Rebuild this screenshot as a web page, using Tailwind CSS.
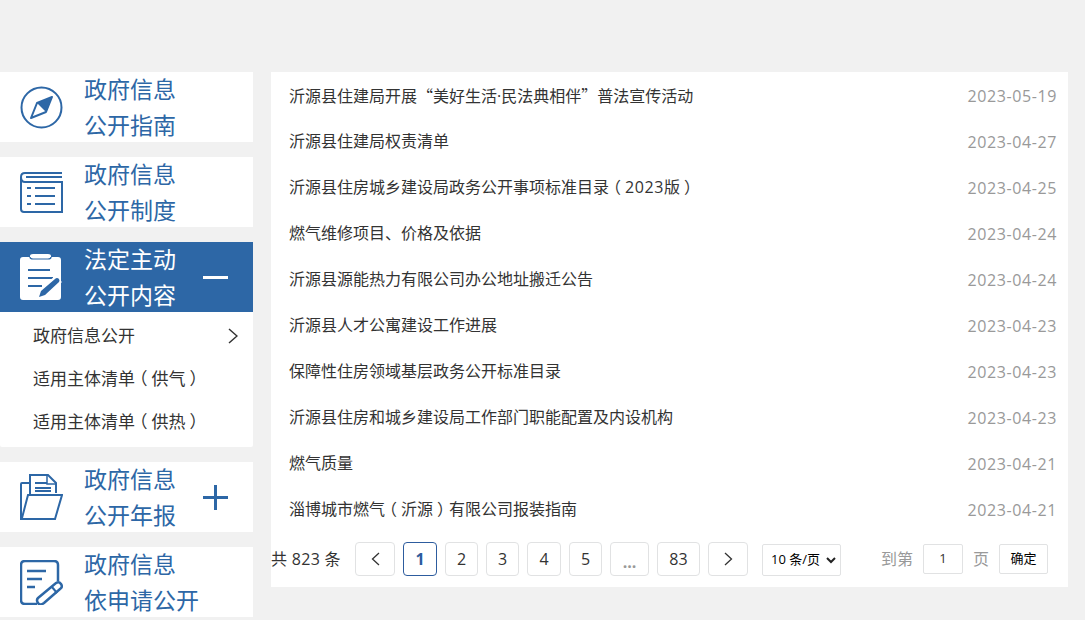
<!DOCTYPE html>
<html lang="zh-CN">

<head>
    <meta charset="UTF-8">
    <title>法定主动公开内容</title>
    <script src="https://cdn.jsdelivr.net/npm/@tailwindcss/browser@4"></script>
</head>

<body class="bg-[#f1f1f1] h-[620px] overflow-hidden font-['Open_Sans','Noto_Sans_CJK_SC',sans-serif]">
    <div class="flex items-start pt-[72px] w-[1085px]">
        <!-- Sidebar -->
        <aside class="w-[253px] flex flex-col gap-[15px] shrink-0">
            <a class="h-[70px] bg-white flex items-center pl-5 text-[#2d67a6]">
                <svg class="w-[43px] h-[43px] shrink-0" viewBox="0 0 43 43" fill="none">
                    <circle cx="21.5" cy="21.5" r="20" stroke="#2d67a6" stroke-width="2"/>
                    <path d="M32 11L17 17L11 32L26 26Z" stroke="#2d67a6" stroke-width="2" stroke-linejoin="round"/>
                    <path d="M32 11L17 17L26 26Z" fill="#2d67a6"/>
                </svg>
                <span class="ml-[21px] text-[23px] leading-[36px]">政府信息<br>公开指南</span>
            </a>
            <a class="h-[70px] bg-white flex items-center pl-5 text-[#2d67a6]">
                <svg class="w-[43px] h-[43px] shrink-0" viewBox="0 0 43 43" fill="none" stroke="#2d67a6">
                    <path d="M42 2H5Q1 2 1 6V38Q1 41 4 41H42V11H5Q1 11 1 6" stroke-width="2"/>
                    <path d="M6 6H42" stroke-width="2"/>
                    <path d="M7 17H11M15 17H35M7 25H11M15 25H35M7 33H11M15 33H35" stroke-width="2"/>
                </svg>
                <span class="ml-[21px] text-[23px] leading-[36px]">政府信息<br>公开制度</span>
            </a>
            <div>
                <a class="h-[70px] bg-[#2d67a6] flex items-center pl-5 text-white">
                    <svg class="w-[43px] h-[46px] shrink-0" viewBox="0 0 43 46" fill="none">
                        <path d="M3 3H10V2Q10 0 13 0H28Q31 0 31 2V3H38Q41 3 41 6V43Q41 46 38 46H3Q0 46 0 43V6Q0 3 3 3Z" fill="#fff"/>
                        <path d="M10 3.5V3Q10 5 13 5H28Q31 5 31 3V3.5" stroke="#2d67a6" stroke-width="1.2"/>
                        <path d="M8 16H30M8 24H33M8 32H22" stroke="#2d67a6" stroke-width="2.2"/>
                        <path d="M16 45L19 36L35 22L42 28L26 42Z" fill="#fff"/>
                        <path d="M19 43L21 37L35 25Q37 23 39 25Q40 27 39 28L25 41Z" fill="#2d67a6"/>
                    </svg>
                    <span class="ml-[21px] text-[23px] leading-[36px]">法定主动<br>公开内容</span>
                    <span class="ml-[27px] w-[25px] h-[3px] bg-white"></span>
                </a>
                <div class="h-[135px] bg-white text-[17px] text-[#333] pl-[33px] pt-[2px] rounded-b-[2px]">
                    <div class="h-[43px] flex items-center justify-between pr-[15px]">
                        <span>政府信息公开</span>
                        <svg class="w-[10px] h-[16px]" viewBox="0 0 10 16" fill="none" stroke="#333" stroke-width="1.5"><path d="M1 1L9 8L1 15"/></svg>
                    </div>
                    <div class="h-[43px] flex items-center"><span>适用主体清单<span class="[font-feature-settings:'halt'] mx-[4px]">（</span>供气<span class="[font-feature-settings:'halt'] mx-[4px]">）</span></span></div>
                    <div class="h-[43px] flex items-center"><span>适用主体清单<span class="[font-feature-settings:'halt'] mx-[4px]">（</span>供热<span class="[font-feature-settings:'halt'] mx-[4px]">）</span></span></div>
                </div>
            </div>
            <a class="h-[70px] bg-white flex items-center pl-5 text-[#2d67a6]">
                <svg class="w-[43px] h-[46px] shrink-0" viewBox="0 0 43 46" fill="none" stroke="#2d67a6" stroke-width="2">
                    <path d="M10 20V1H28L36 9V19"/>
                    <path d="M27 1V10H36" stroke-width="1.5"/>
                    <path d="M15 9H27M15 14H31M15 17H31" stroke-width="2"/>
                    <path d="M10 9H2Q1 9 1 10V45H35L42 21H8L2 44"/>
                </svg>
                <span class="ml-[21px] text-[23px] leading-[36px]">政府信息<br>公开年报</span>
                <span class="ml-[27px] w-[25px] h-[25px] relative">
                    <span class="absolute left-0 top-[11px] w-[25px] h-[3px] bg-[#2d67a6]"></span>
                    <span class="absolute left-[11px] top-0 w-[3px] h-[25px] bg-[#2d67a6]"></span>
                </span>
            </a>
            <a class="h-[70px] bg-white flex items-center pl-5 text-[#2d67a6]">
                <svg class="w-[43px] h-[45px] shrink-0" viewBox="0 0 43 45" fill="none" stroke="#2d67a6">
                    <path d="M17 44H5Q1 44 1 40V5Q1 1 5 1H34Q38 1 38 5V21" stroke-width="2.5"/>
                    <path d="M7 11H26M7 19H22M7 27H15" stroke-width="2.5"/>
                    <path d="M18 38L36 23Q39 21 41 24Q43 27 40 29L24 43Q20 46 18 43Q16 40 18 38Z" stroke-width="2.5"/>
                    <path d="M32 27L37 33" stroke-width="2"/>
                </svg>
                <span class="ml-[21px] text-[23px] leading-[36px]">政府信息<br>依申请公开</span>
            </a>
        </aside>

        <!-- List -->
        <main class="ml-[18px] w-[797px] h-[515px] bg-white">
            <ul class="pl-[18px] pr-[11px] text-[16px]">
                <li class="h-[46px] flex items-center justify-between text-[#333]"><span>沂源县住建局开展<span class="font-['Noto_Sans_CJK_SC']">“</span>美好生活·民法典相伴<span class="font-['Noto_Sans_CJK_SC']">”</span>普法宣传活动</span><span class="text-[#999] tracking-[0.6px] pt-[2px]">2023-05-19</span></li>
                <li class="h-[46px] flex items-center justify-between text-[#333]"><span>沂源县住建局权责清单</span><span class="text-[#999] tracking-[0.6px] pt-[2px]">2023-04-27</span></li>
                <li class="h-[46px] flex items-center justify-between text-[#333]"><span>沂源县住房城乡建设局政务公开事项标准目录<span class="[font-feature-settings:'halt'] mx-[4px]">（</span><span class="tracking-[0.6px]">2023</span>版<span class="[font-feature-settings:'halt'] mx-[4px]">）</span></span><span class="text-[#999] tracking-[0.6px] pt-[2px]">2023-04-25</span></li>
                <li class="h-[46px] flex items-center justify-between text-[#333]"><span>燃气维修项目、价格及依据</span><span class="text-[#999] tracking-[0.6px] pt-[2px]">2023-04-24</span></li>
                <li class="h-[46px] flex items-center justify-between text-[#333]"><span>沂源县源能热力有限公司办公地址搬迁公告</span><span class="text-[#999] tracking-[0.6px] pt-[2px]">2023-04-24</span></li>
                <li class="h-[46px] flex items-center justify-between text-[#333]"><span>沂源县人才公寓建设工作进展</span><span class="text-[#999] tracking-[0.6px] pt-[2px]">2023-04-23</span></li>
                <li class="h-[46px] flex items-center justify-between text-[#333]"><span>保障性住房领域基层政务公开标准目录</span><span class="text-[#999] tracking-[0.6px] pt-[2px]">2023-04-23</span></li>
                <li class="h-[46px] flex items-center justify-between text-[#333]"><span>沂源县住房和城乡建设局工作部门职能配置及内设机构</span><span class="text-[#999] tracking-[0.6px] pt-[2px]">2023-04-23</span></li>
                <li class="h-[46px] flex items-center justify-between text-[#333]"><span>燃气质量</span><span class="text-[#999] tracking-[0.6px] pt-[2px]">2023-04-21</span></li>
                <li class="h-[46px] flex items-center justify-between text-[#333]"><span>淄博城市燃气<span class="[font-feature-settings:'halt'] mx-[4px]">（</span>沂源<span class="[font-feature-settings:'halt'] mx-[4px]">）</span>有限公司报装指南</span><span class="text-[#999] tracking-[0.6px] pt-[2px]">2023-04-21</span></li>
            </ul>

            <!-- Pagination -->
            <div class="flex items-center h-[34px] mt-[10px] text-[16px] text-[#333]">
                <span class="w-[84px] whitespace-nowrap tracking-[0.3px]">共 823 条</span>
                <a class="w-10 h-[34px] border border-[#e1e2e3] rounded-[4px] flex items-center justify-center"><svg class="w-[9px] h-[14px]" viewBox="0 0 9 14" fill="none" stroke="#333" stroke-width="1.3"><path d="M8 1L1.5 7L8 13"/></svg></a>
                <a class="ml-[8px] w-[34px] h-[34px] border border-[#2d5c9e] rounded-[4px] flex items-center justify-center font-bold text-[#2d5c9e]">1</a>
                <a class="ml-[8px] w-[33px] h-[34px] border border-[#e1e2e3] rounded-[4px] flex items-center justify-center">2</a>
                <a class="ml-[8px] w-[33px] h-[34px] border border-[#e1e2e3] rounded-[4px] flex items-center justify-center">3</a>
                <a class="ml-[8px] w-[34px] h-[34px] border border-[#e1e2e3] rounded-[4px] flex items-center justify-center">4</a>
                <a class="ml-[8px] w-[33px] h-[34px] border border-[#e1e2e3] rounded-[4px] flex items-center justify-center">5</a>
                <a class="ml-[8px] w-[39px] h-[34px] border border-[#e1e2e3] rounded-[4px] flex items-center justify-center font-bold text-[#999] pt-[5px]">...</a>
                <a class="ml-[8px] w-[43px] h-[34px] border border-[#e1e2e3] rounded-[4px] flex items-center justify-center">83</a>
                <a class="ml-[8px] w-10 h-[34px] border border-[#e1e2e3] rounded-[4px] flex items-center justify-center"><svg class="w-[9px] h-[14px]" viewBox="0 0 9 14" fill="none" stroke="#333" stroke-width="1.3"><path d="M1 1L7.5 7L1 13"/></svg></a>
                <div class="ml-[14px] mt-[2px] w-[79px] h-[32px] border border-[#e1e2e3] rounded-[2px] flex items-center justify-between pl-2 pr-[4px] text-[13px] text-black whitespace-nowrap">
                    <span>10 条/页</span>
                    <svg class="w-[10px] h-[7px]" viewBox="0 0 10 7" fill="none" stroke="#222" stroke-width="2"><path d="M1 1L5 5L9 1"/></svg>
                </div>
                <span class="ml-[40px] text-[#999] whitespace-nowrap">到第</span>
                <div class="ml-[10px] w-10 h-[30px] border border-[#e1e2e3] rounded-[2px] flex items-center justify-center text-[13px]">1</div>
                <span class="ml-[10px] text-[#999]">页</span>
                <div class="ml-[10px] w-[49px] h-[30px] border border-[#e1e2e3] rounded-[2px] flex items-center justify-center text-[13px] text-black">确定</div>
            </div>
        </main>
    </div>
</body>

</html>
